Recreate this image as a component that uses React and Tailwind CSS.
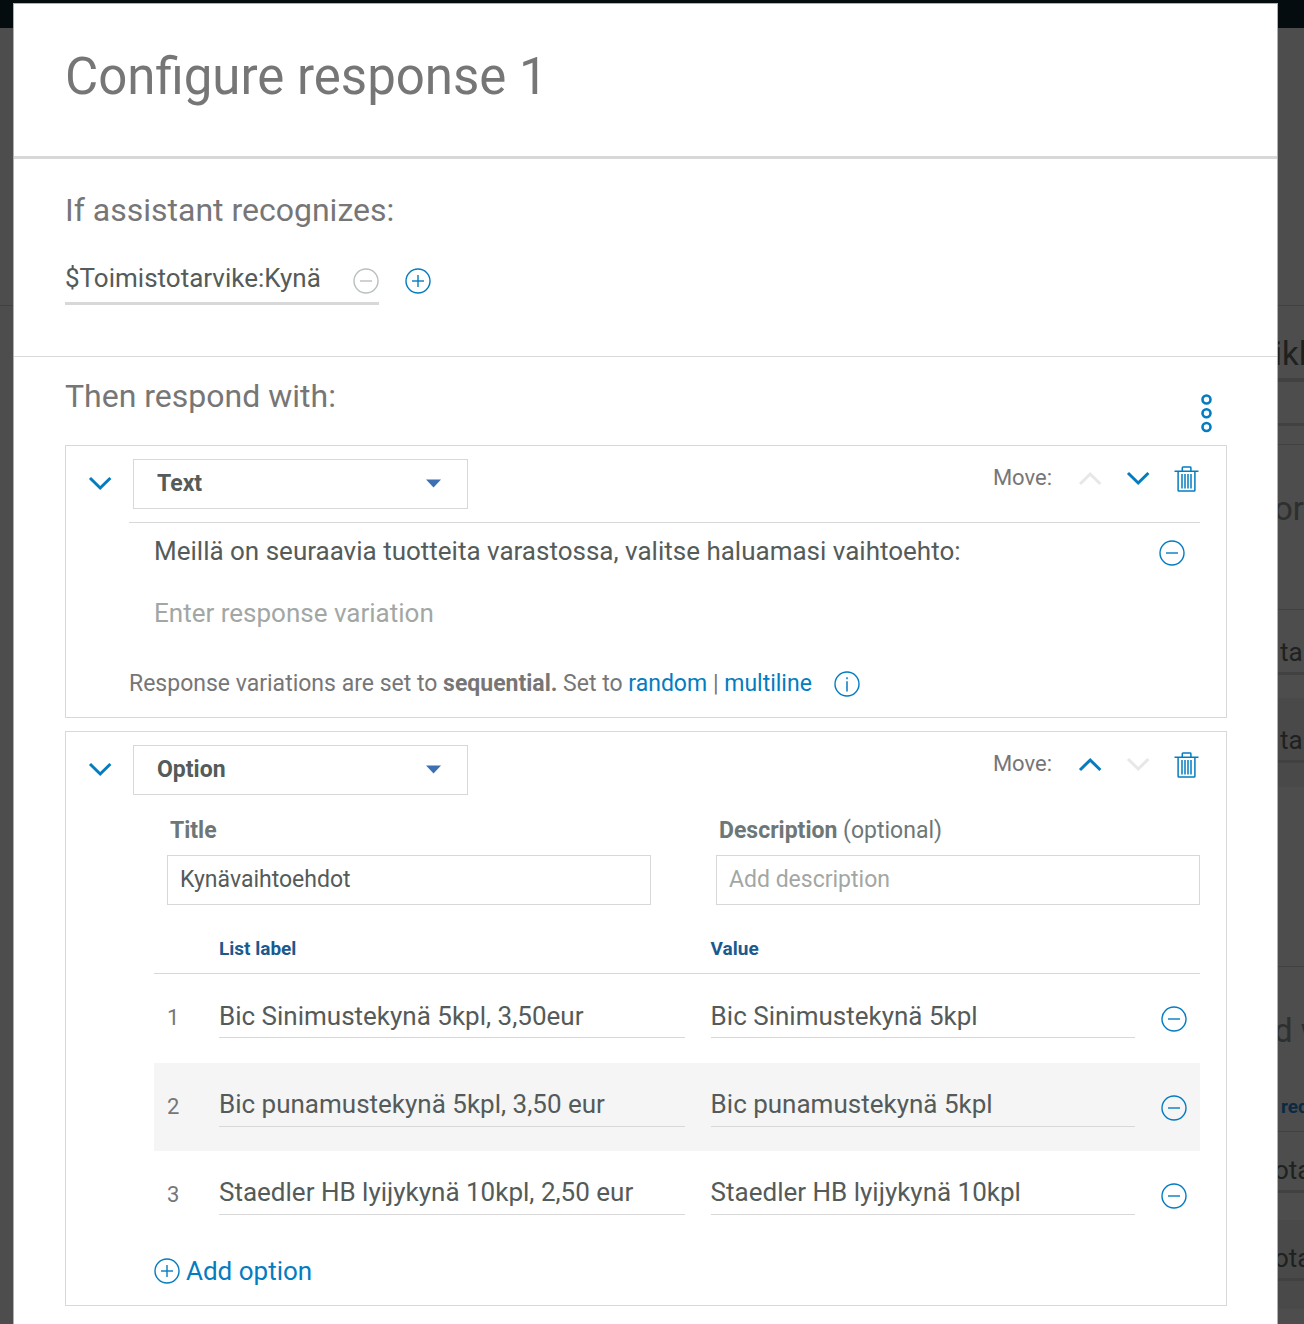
import React, { useState } from "react";

const BLUE = "#047cc0";

function CircleIcon({ kind, color = BLUE }) {
  return (
    <svg className="block" width="26" height="26" viewBox="0 0 26 26" fill="none" stroke={color} aria-hidden="true">
      <circle cx="13" cy="13" r="12" strokeWidth="1.4" />
      {kind !== "info" && <path d="M7 13h12" strokeWidth="1.4" />}
      {kind === "plus" && <path d="M13 7v12" strokeWidth="1.4" />}
      {kind === "info" && <path d="M13 10.2v10.4M13 6.2v2" strokeWidth="1.5" />}
    </svg>
  );
}

function Chevron({ up = false, color = BLUE }) {
  return (
    <svg className="block" width="24" height="16" viewBox="0 0 24 16" fill="none" stroke={color} strokeWidth="3" aria-hidden="true">
      <path d={up ? "M2 13L12.2 3L22.4 13" : "M2 2L12.2 12L22.4 2"} />
    </svg>
  );
}

function Trash() {
  return (
    <svg className="block" width="26" height="26" viewBox="0 0 26 26" fill="none" stroke={BLUE} strokeWidth="1.5" aria-hidden="true">
      <path d="M0.5 5.2h24M8.3 5V1.7Q8.3 1 9 1h7.2Q16.9 1 16.9 1.7V5M4.1 5.2V24.2Q4.1 25 4.9 25h15.2Q20.9 25 20.9 24.2V5.2M8 8v14.4M11 8v14.4M14 8v14.4M17 8v14.4" />
    </svg>
  );
}

function Kebab() {
  return (
    <svg className="block" width="12" height="40" viewBox="0 0 12 40" fill="none" stroke={BLUE} strokeWidth="2.6" aria-hidden="true">
      <circle cx="5.5" cy="6.5" r="4" />
      <circle cx="5.5" cy="20.3" r="4" />
      <circle cx="5.5" cy="34" r="4" />
    </svg>
  );
}

function IconButton({ label, className = "", children, ...rest }) {
  return (
    <button type="button" aria-label={label} className={"shrink-0 " + className} {...rest}>
      {children}
    </button>
  );
}

function CardHeader({ type, canUp, canDown }) {
  const [value, setValue] = useState(type);
  return (
    <div className="flex items-start justify-between pt-[13px] pr-[26px] pl-[22px]">
      <div className="flex items-center">
        <IconButton label="Collapse">
          <Chevron />
        </IconButton>
        <div className="relative ml-[21px]">
          <select
            aria-label="Response type"
            value={value}
            onChange={(e) => setValue(e.target.value)}
            className="block h-[50px] w-[335px] appearance-none border border-[#d8d8d8] bg-white pl-[23px] text-[23px] font-bold text-[#545b59]"
          >
            <option>Text</option>
            <option>Option</option>
          </select>
          <svg className="pointer-events-none absolute top-5 right-[26px]" width="16" height="9" viewBox="0 0 16 9" aria-hidden="true">
            <path d="M0 0.5h15L7.5 8.5z" fill="#3d70b2" />
          </svg>
        </div>
      </div>
      <div className="flex items-center pt-[5px]">
        <span className="pb-0.5 text-[22px] leading-7 text-[#777677]">Move:</span>
        <IconButton label="Move up" className="ml-[26px]" disabled={!canUp}>
          <Chevron up color={canUp ? BLUE : "#e6e7e7"} />
        </IconButton>
        <IconButton label="Move down" className="ml-6" disabled={!canDown}>
          <Chevron color={canDown ? BLUE : "#e6e7e7"} />
        </IconButton>
        <IconButton label="Delete response" className="ml-6">
          <Trash />
        </IconButton>
      </div>
    </div>
  );
}

const options = [
  ["Bic Sinimustekynä 5kpl, 3,50eur", "Bic Sinimustekynä 5kpl"],
  ["Bic punamustekynä 5kpl, 3,50 eur", "Bic punamustekynä 5kpl"],
  ["Staedler HB lyijykynä 10kpl, 2,50 eur", "Staedler HB lyijykynä 10kpl"],
];

const cell =
  "block h-10 w-full border-b border-[#d8d8d8] bg-transparent pb-1 text-[26px] text-[#545b59] outline-none";
const box =
  "block h-[50px] w-full border border-[#d8d8d8] bg-white px-3 pb-0.5 text-[23px] text-[#545b59] outline-none placeholder:text-[#a2a7a5]";

function OptionTable() {
  return (
    <table className="w-full table-fixed border-collapse text-left">
      <colgroup>
        <col className="w-[65px]" />
        <col className="w-[47%]" />
        <col />
        <col className="w-[39px]" />
      </colgroup>
      <thead>
        <tr className="border-b border-[#d8d8d8] text-[19px] leading-6 text-[#1a5a8f]">
          <td />
          <th scope="col" className="pt-8 pb-3 font-bold">List label</th>
          <th scope="col" className="pt-8 pb-3 font-bold">Value</th>
          <td />
        </tr>
      </thead>
      <tbody>
        {options.map(([label, value], i) => (
          <tr key={label} className="h-[88px] align-top first:h-[89px] even:bg-[#f5f5f5]">
            <td className="pt-[30px] pl-[13px] text-[22px] leading-7 text-[#777677]">{i + 1}</td>
            <td className="pt-6 pr-[26px]">
              <input aria-label={"List label " + (i + 1)} defaultValue={label} className={cell} />
            </td>
            <td className="pt-6 pr-[26px]">
              <input aria-label={"Value " + (i + 1)} defaultValue={value} className={cell} />
            </td>
            <td className="pt-8">
              <IconButton label={"Remove option " + (i + 1)}>
                <CircleIcon kind="minus" />
              </IconButton>
            </td>
          </tr>
        ))}
      </tbody>
    </table>
  );
}

function Backdrop() {
  return (
    <div className="w-[26px] shrink-0 overflow-hidden bg-[#4d4d4d] whitespace-nowrap text-[#1e2120]" aria-hidden="true">
      <div className="h-7 bg-[#050c10]" />
      <div className="h-[278px] border-b border-[#414141]" />
      <div className="-ml-1 h-[76px] border-b-4 border-[#414141] pt-7 text-[33px] leading-10">ikl</div>
      <div className="h-11 border-b-3 border-[#414141]" />
      <div className="h-[19px] border-b border-[#414141]" />
      <div className="-ml-1 h-[165px] border-b border-[#414141] pt-11 text-[33px] leading-10 text-[#2e2f2f]">or</div>
      <div className="h-[65px] border-b-3 border-[#414141] pt-[26px] pl-0.5 text-[26px] leading-8">tar</div>
      <div className="h-[23px]" />
      <div className="h-[65px] border-b-3 border-[#414141] bg-[#494949] pt-[26px] pl-0.5 text-[26px] leading-8">tap</div>
      <div className="h-6 bg-[#494949]" />
      <div className="h-[180px] border-b border-[#414141]" />
      <div className="h-[165px] border-b border-[#414141]">
        <div className="-ml-1 pt-11 text-[33px] leading-10 text-[#2e2f2f]">d w</div>
        <div className="pt-11 pl-[3px] text-[19px] leading-6 font-bold text-[#0b2a42]">red</div>
      </div>
      <div className="-ml-1 h-[61px] border-b-3 border-[#414141] pt-[22px] text-[26px] leading-8">ota</div>
      <div className="h-[27px]" />
      <div className="-ml-1 h-[61px] border-b-3 border-[#414141] bg-[#494949] pt-[22px] text-[26px] leading-8">ota</div>
      <div className="h-7 bg-[#494949]" />
    </div>
  );
}

export default function App() {
  return (
    <div className="flex min-h-screen bg-[#4d4d4d] font-[Roboto,'Liberation_Sans',sans-serif]">
      <div className="w-[13px] shrink-0" aria-hidden="true">
        <div className="h-7 bg-[#050c10]" />
        <div className="h-[278px] border-b border-[#414141]" />
      </div>
      <div className="flex min-w-0 flex-1 flex-col bg-[#050c10] pt-[3px]">
        <main role="dialog" aria-labelledby="dialog-title" className="flex-1 border border-b-0 border-[#aab3b0] bg-white">
          <header className="border-b-3 border-[#d8d8d8] px-[51px] pt-[41px] pb-[47px]">
            <h1 id="dialog-title" className="text-[51px] leading-16 text-[#777677]">Configure response 1</h1>
          </header>

          <section className="border-b border-[#d8d8d8] px-[51px] pt-[31px] pb-[51px]">
            <h2 className="text-[32px] leading-10 text-[#777677]">If assistant recognizes:</h2>
            <div className="mt-[27px] flex items-center gap-[26px]">
              <div className="flex h-12 w-[314px] items-center border-b-3 border-[#d8d8d8] pt-0.5">
                <input
                  aria-label="Condition"
                  defaultValue="$Toimistotarvike:Kynä"
                  className="h-10 min-w-0 flex-1 bg-transparent pb-1.5 text-[26px] text-[#545b59] outline-none"
                />
                <IconButton label="Remove condition">
                  <CircleIcon kind="minus" color="#b9c0bd" />
                </IconButton>
              </div>
              <IconButton label="Add condition">
                <CircleIcon kind="plus" />
              </IconButton>
            </div>
          </section>

          <section className="pr-[50px] pb-[18px] pl-[51px]">
            <div className="flex h-[88px] justify-between pt-[19px]">
              <h2 className="text-[32px] leading-10 text-[#777677]">Then respond with:</h2>
              <IconButton label="More actions" className="mt-[17px] mr-[14px] self-start">
                <Kebab />
              </IconButton>
            </div>

            <article className="border border-[#d8d8d8] pb-[17px]">
              <CardHeader type="Text" canDown />
              <div className="mt-[13px] mr-[26px] ml-[63px] border-t border-[#d8d8d8]">
                <div className="flex items-center pt-3 pr-[15px] pl-[25px]">
                  <input
                    aria-label="Response variation 1"
                    defaultValue="Meillä on seuraavia tuotteita varastossa, valitse haluamasi vaihtoehto:"
                    className="h-9 min-w-0 flex-1 bg-transparent pb-1 text-[26px] text-[#545b59] outline-none"
                  />
                  <IconButton label="Remove variation">
                    <CircleIcon kind="minus" />
                  </IconButton>
                </div>
                <div className="pt-[26px] pl-[25px]">
                  <input
                    aria-label="Response variation 2"
                    placeholder="Enter response variation"
                    className="block h-9 w-full bg-transparent pb-1 text-[26px] text-[#545b59] outline-none placeholder:text-[#a2a7a5]"
                  />
                </div>
                <div className="flex items-center gap-[22px] pt-[35px]">
                  <p className="text-[23px] leading-8 text-[#777677]">
                    Response variations are set to <b>sequential.</b> Set to{" "}
                    <a href="#random" className="text-[#047cc0]">random</a> |{" "}
                    <a href="#multiline" className="text-[#047cc0]">multiline</a>
                  </p>
                  <IconButton label="About response variations">
                    <CircleIcon kind="info" />
                  </IconButton>
                </div>
              </div>
            </article>

            <article className="mt-[13px] border border-[#d8d8d8] pb-[18px]">
              <CardHeader type="Option" canUp />
              <div className="mt-5 mr-[26px] ml-[101px] grid grid-cols-2 gap-[65px]">
                <div>
                  <label htmlFor="title" className="block pb-2 pl-[3px] text-[23px] leading-8 font-bold text-[#6d7777]">Title</label>
                  <input id="title" defaultValue="Kynävaihtoehdot" className={box} />
                </div>
                <div>
                  <label htmlFor="description" className="block pb-2 pl-[3px] text-[23px] leading-8 text-[#6d7777]">
                    <b>Description</b> (optional)
                  </label>
                  <input id="description" placeholder="Add description" className={box} />
                </div>
              </div>
              <div className="mr-[26px] ml-[88px]">
                <OptionTable />
                <button type="button" className="mt-4 flex items-center gap-1.5 text-[26px] leading-8 text-[#047cc0]">
                  <CircleIcon kind="plus" />
                  Add option
                </button>
              </div>
            </article>
          </section>
        </main>
      </div>
      <Backdrop />
    </div>
  );
}
